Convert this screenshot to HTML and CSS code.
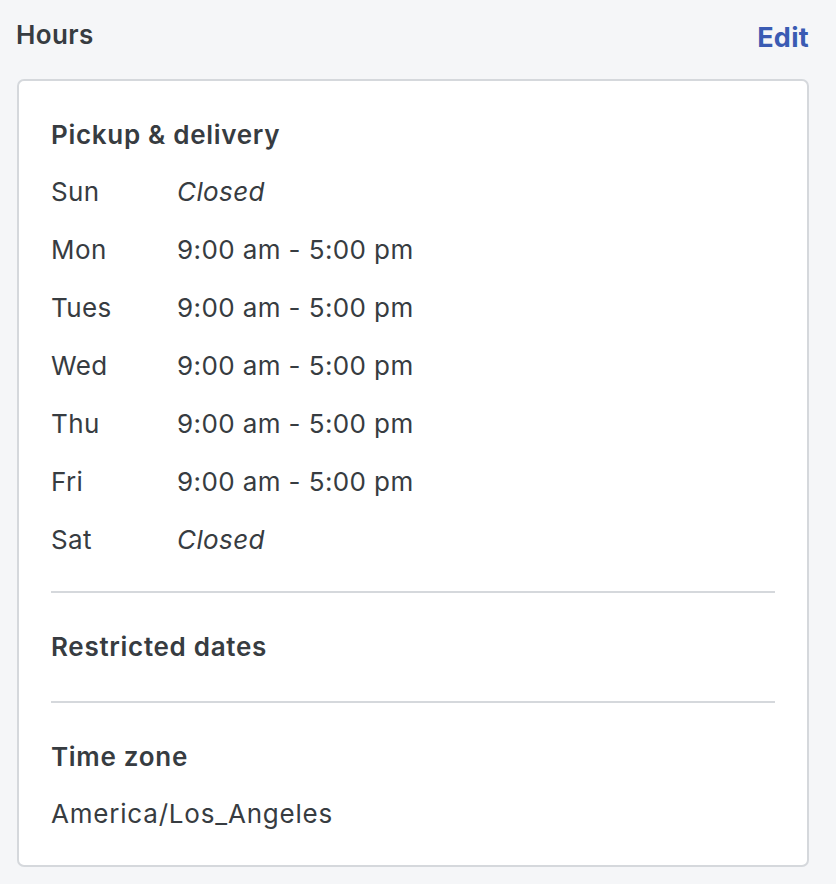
FILE: index.html
```html
<!DOCTYPE html>
<html>
<head>
<meta charset="utf-8">
<link rel="stylesheet" href="styles.css">
</head>
<body>
<div class="page">
  <div class="header">
    <h2 class="title">Hours</h2>
    <a class="edit">Edit</a>
  </div>
  <div class="card">
    <div class="section">
      <h3 class="section-title">Pickup &amp; delivery</h3>
      <div class="rows">
        <div class="row"><span class="day">Sun</span><span class="closed">Closed</span></div>
        <div class="row"><span class="day">Mon</span><span>9:00 am - 5:00 pm</span></div>
        <div class="row"><span class="day">Tues</span><span>9:00 am - 5:00 pm</span></div>
        <div class="row"><span class="day">Wed</span><span>9:00 am - 5:00 pm</span></div>
        <div class="row"><span class="day">Thu</span><span>9:00 am - 5:00 pm</span></div>
        <div class="row"><span class="day">Fri</span><span>9:00 am - 5:00 pm</span></div>
        <div class="row"><span class="day">Sat</span><span class="closed">Closed</span></div>
      </div>
    </div>
    <div class="section">
      <h3 class="section-title">Restricted dates</h3>
    </div>
    <div class="section">
      <h3 class="section-title">Time zone</h3>
      <div class="rows"><div class="row tz">America/Los_Angeles</div></div>
    </div>
  </div>
</div>
</body>
</html>
```
FILE: styles.css
```css
html, body {
  margin: 0;
  padding: 0;
  background: #f5f6f8;
}
body {
  font-family: Inter, "Noto Sans", sans-serif;
  color: #373c41;
}
.page {
  padding: 17px 27px 0 16px;
}
.header {
  display: flex;
  justify-content: space-between;
  align-items: flex-start;
  height: 62px;
}
.title {
  margin: 0;
  font-size: 26px;
  font-weight: 600;
  letter-spacing: 0.4px;
  line-height: 36px;
  color: #373c41;
}
.edit {
  font-size: 27px;
  font-weight: 700;
  letter-spacing: 0.3px;
  line-height: 36px;
  margin-top: 3px;
  color: #3a5bb3;
  cursor: pointer;
}
.card {
  margin-left: 1px;
  background: #fff;
  border: 2px solid #d5d8dc;
  border-radius: 7px;
  padding: 0 32px;
}
.section {
  padding: 33px 0;
}
.section + .section {
  border-top: 2px solid #d5d8dc;
}
.section-title {
  margin: 0;
  font-size: 26px;
  font-weight: 600;
  letter-spacing: 0.7px;
  line-height: 42px;
}
.rows {
  margin-top: 18px;
  display: flex;
  flex-direction: column;
  gap: 22px;
}
.row {
  display: flex;
  font-size: 26px;
  letter-spacing: 0.4px;
  line-height: 36px;
}
.row.tz {
  letter-spacing: 0.8px;
}
.day {
  width: 126px;
}
.closed {
  font-style: italic;
}
```
